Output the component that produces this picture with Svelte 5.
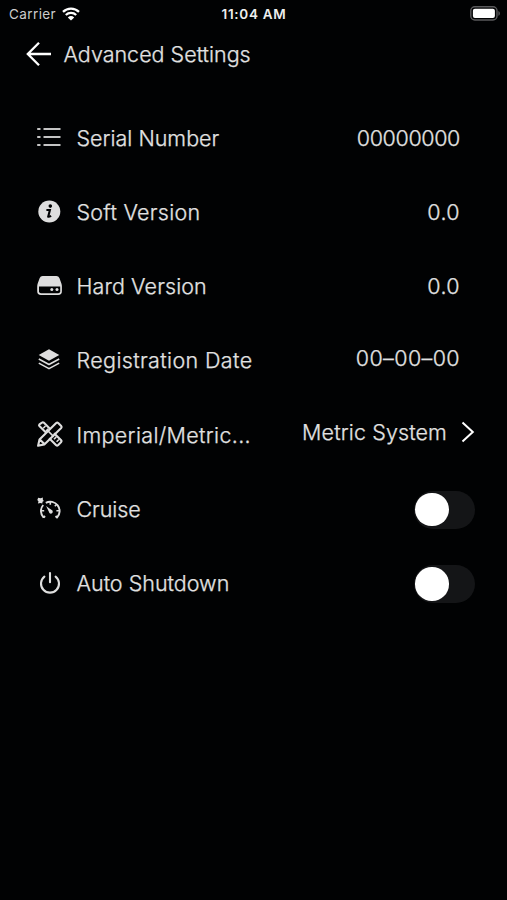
<script>
    // spacing is the letter spacing in px for the label and the value
    const rows = [
        { icon: "list", label: "Serial Number", spacing: 0, value: "00000000", valueSpacing: -0.38 },
        { icon: "info", label: "Soft Version", spacing: 0.25, value: "0.0", valueSpacing: 0.4 },
        { icon: "drive", label: "Hard Version", spacing: 0.1, value: "0.0", valueSpacing: 0.4 },
        { icon: "layers", label: "Registration Date", spacing: 0.37, value: "00–00–00", valueSpacing: 0.38, raised: true },
        { icon: "ruler", label: "Imperial/Metric...", spacing: 0.33, value: "Metric System", valueSpacing: 0.12, raised: true, link: true },
        { icon: "cruise", label: "Cruise", spacing: -0.1, toggle: "cruise" },
        { icon: "power", label: "Auto Shutdown", spacing: 0, toggle: "shutdown" },
    ];

    let switches = $state({ cruise: false, shutdown: false });
</script>

<main class="screen">
    <div class="status-bar">
        <div class="carrier">
            <span>Carrier</span>
            <svg class="wifi" viewBox="0 0 18 14" aria-hidden="true">
                <path d="M1 4.8a11.6 11.6 0 0 1 16 0M3.8 8a7.6 7.6 0 0 1 10.4 0" fill="none" stroke="#fff" stroke-width="2.3" />
                <path d="M9 13.6 5.8 10.4a4.7 4.7 0 0 1 6.4 0z" fill="#fff" />
            </svg>
        </div>
        <time>11:04 AM</time>
        <svg class="battery" viewBox="0 0 31 15" aria-hidden="true">
            <rect x=".8" y=".8" width="26.2" height="13.2" rx="4" fill="none" stroke="#5a5a5c" stroke-width="1.4" />
            <rect x="2.9" y="2.8" width="22" height="9.3" rx="2" fill="#fff" />
            <path d="M28.4 5v4.8c2-.8 2-4 0-4.8" fill="#5a5a5c" />
        </svg>
    </div>

    <header>
        <button class="back" aria-label="Back">
            <svg viewBox="0 0 26 26">
                <path d="M25 13H2M13 1.7 1.8 13 13 24.3" fill="none" stroke="#fff" stroke-width="2.3" />
            </svg>
        </button>
        <h1>Advanced Settings</h1>
    </header>

    <ul class="settings">
        {#each rows as row}
            <li>
                <svg class="icon" viewBox="0 0 30 30" aria-hidden="true">
                    {#if row.icon === "list"}
                        <path d="M3.2 6h3.3M9.5 6h17M3.2 14h3.3M9.5 14h17M3.2 22h3.3M9.5 22h17" class="line bars" />
                    {:else if row.icon === "info"}
                        <circle cx="15.3" cy="14.5" r="11" class="fill" />
                        <circle cx="16.3" cy="9.1" r="1.8" class="dark" />
                        <path d="M12.4 13h3.5l-1.7 6.7q.7.4 2.9-.9" fill="none" stroke="#010203" stroke-width="2.1" />
                    {:else if row.icon === "drive"}
                        <path d="M8.6 4.9h13.8q2.1 0 3 2l2 5.6q.5 1.4.5 3v4.7q0 3.8-3.8 3.8H7q-3.8 0-3.8-3.8v-4.7q0-1.6.5-3l2-5.6q.8-2 2.9-2z" class="fill" />
                        <path d="M5 15.4h21.2v4.8q0 2-2 2H7q-2 0-2-2z" class="dark" />
                        <circle cx="17.8" cy="18.5" r="1.5" class="fill" />
                        <circle cx="23" cy="18.5" r="1.5" class="fill" />
                    {:else if row.icon === "layers"}
                        <path d="m15 4.2 10.3 5.7L15 15.7 4.7 9.9z" class="fill" />
                        <path d="m4.8 14 10.2 5.5L25.2 14M4.8 18.1 15 23.6l10.2-5.5" class="line thin" />
                    {:else if row.icon === "ruler"}
                        <path d="m4.1 25.7 1.4-6.3L22.2 3q1-.8 2 0l3 3q.9 1 0 2L10.3 24.4zM5.8 19.5l4.6 4.6" class="line wide" />
                        <path d="m12.2 12.8-6.8-6.7q-.8-.9 0-1.7L8 2.6q.8-.7 1.7 0l6.7 6.6M20 13.3l7.2 7q.8.9 0 1.8l-3.2 3.2q-.9.8-1.8 0l-7-7.1" class="line wide" />
                        <path d="m12.6 9.5 7.1 7.1M9.2 8.3l2.3-2.3M12 11l2.2-2.2M20 19.2l2.3-2.3M22.6 21.8l2.3-2.3" class="line thin" />
                    {:else if row.icon === "cruise"}
                        <path d="M9.6 23.6 11 22M9.6 23.6A9.4 9.4 0 0 1 9.2 11M11.8 8.8A9.4 9.4 0 0 1 23 23.6L21.6 22" class="line" />
                        <path d="M16.3 7.5v3.2M7.2 16.7h3M22.4 16.7h3M22.8 10.2l-2 2" class="line thin" />
                        <path d="m12.1 12 5.6 4.1a1.9 1.9 0 1 1-2.7 2z" class="fill" />
                        <path d="m4.2 3.7 2.4.5 2.3-.6-.1 2 1 1.3-1.3.9-.2 1.8-2-.7-2.4.5.6-2L3.3 6z" class="fill" />
                    {:else}
                        <path d="M10.4 8.6a9 9 0 1 0 11.2 0M16 5.1v9.2" class="line power" />
                    {/if}
                </svg>
                <span class="label" style="letter-spacing: {row.spacing}px">{row.label}</span>

                {#if row.toggle}
                    <button
                        class="toggle"
                        class:on={switches[row.toggle]}
                        role="switch"
                        aria-checked={switches[row.toggle]}
                        aria-label={row.label}
                        onclick={() => (switches[row.toggle] = !switches[row.toggle])}
                    >
                        <span class="knob"></span>
                    </button>
                {:else}
                    <span class="value" class:raised={row.raised} class:link={row.link}>
                        <span style="letter-spacing: {row.valueSpacing}px">{row.value}</span>
                        {#if row.link}
                            <svg class="chevron" viewBox="0 0 14 22" aria-hidden="true">
                                <path d="m1.5 1.5 10.3 9.5L1.5 20.5" fill="none" stroke="#fff" stroke-width="2" />
                            </svg>
                        {/if}
                    </span>
                {/if}
            </li>
        {/each}
    </ul>
</main>

<style>
    :global(body) {
        background: #010203;
    }

    .screen {
        box-sizing: border-box;
        height: 900px;
        background: #010203;
        color: #e2e2e2;
        font-family: Inter, "Liberation Sans", sans-serif;
        font-weight: 300;
    }

    .status-bar {
        display: grid;
        grid-template-columns: 1fr auto 1fr;
        align-items: center;
        height: 27px;
        padding: 0 6px 0 9px;
        font-size: 13.5px;
    }

    .carrier {
        display: flex;
        align-items: center;
        gap: 6px;
        font-weight: 400;
        letter-spacing: 0.4px;
        color: #ccc;
    }

    .wifi {
        width: 18px;
        height: 14px;
    }

    .status-bar time {
        font-weight: 600;
        letter-spacing: 0.7px;
        margin-right: 2px;
        color: #eee;
    }

    .battery {
        width: 31px;
        height: 15px;
        justify-self: end;
    }

    header {
        display: flex;
        align-items: center;
        gap: 12px;
        height: 54px;
        padding-left: 25.5px;
    }

    button {
        border: 0;
        padding: 0;
        cursor: pointer;
    }

    .back {
        display: flex;
        background: none;
    }

    .back svg {
        width: 26px;
        height: 26px;
    }

    h1 {
        margin: 0;
        font-size: 21.5px;
        font-weight: 300;
    }

    /* Light is a little thin on black, so thicken the strokes. */
    h1,
    .label,
    .value {
        -webkit-text-stroke: 0.25px currentColor;
    }

    .settings {
        list-style: none;
        margin: 0;
        padding: 19.7px 32px 0 34px;
    }

    li {
        display: flex;
        align-items: center;
        height: 74.2px;
        font-size: 21.5px;
        white-space: nowrap;
    }

    .icon {
        width: 30px;
        height: 30px;
        margin-right: 12.5px;
        flex: none;
    }

    .fill {
        fill: #dedede;
    }

    .dark {
        fill: #010203;
    }

    .line {
        fill: none;
        stroke: #dedede;
        stroke-width: 1.9;
        stroke-linejoin: round;
    }

    .bars {
        stroke-width: 2.2;
        stroke: #c4c4c4;
    }

    .wide {
        stroke-width: 2.1;
    }

    .thin {
        stroke-width: 1.6;
    }

    .power {
        stroke-width: 2.1;
        stroke-linecap: round;
    }

    .value {
        display: flex;
        align-items: center;
        margin-left: auto;
        margin-right: 15px;
    }

    .raised {
        padding-bottom: 5px;
    }

    .link {
        gap: 14px;
        margin-right: 0;
    }

    .chevron {
        width: 14px;
        height: 22px;
    }

    .toggle {
        display: flex;
        align-items: center;
        box-sizing: border-box;
        width: 61px;
        height: 38px;
        margin: 2px 0 0 auto;
        padding: 0 1px;
        border-radius: 19px;
        background: #141517;
    }

    .toggle.on {
        justify-content: flex-end;
        background: #34c759;
    }

    .knob {
        width: 33.5px;
        height: 33.5px;
        border-radius: 50%;
        background: #fff;
    }
</style>
